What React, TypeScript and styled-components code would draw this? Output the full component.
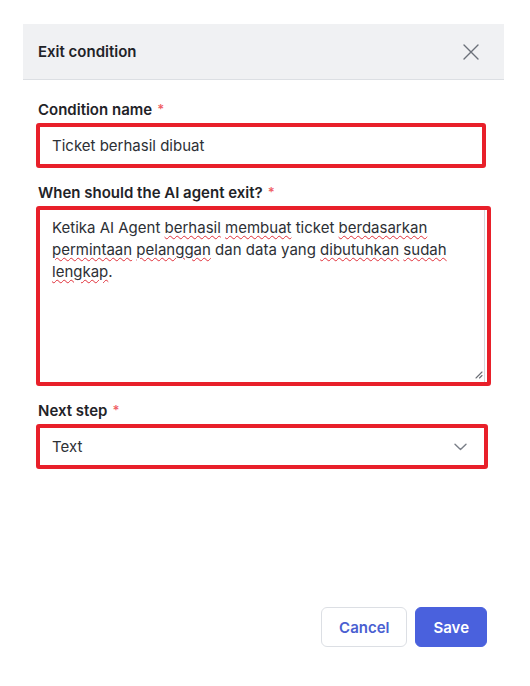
import React from "react";
import styled, { createGlobalStyle } from "styled-components";

const GlobalStyle = createGlobalStyle`
  html, body {
    margin: 0;
    padding: 0;
    background: #ffffff;
  }
  body {
    font-family: Inter, "Noto Sans", "Liberation Sans", sans-serif;
    color: #1f2328;
  }
`;

const Panel = styled.div`
  display: flex;
  flex-direction: column;
  width: 481px;
  height: 662px;
  margin: 24px 0 0 23px;
  background: #ffffff;
`;

const Header = styled.div`
  display: flex;
  align-items: center;
  justify-content: space-between;
  height: 55px;
  padding: 0 25px 0 15px;
  background: #f0f1f3;
  border-bottom: 1px solid #dcdfe3;
`;

const Title = styled.h2`
  margin: 0;
  font-size: 15px;
  font-weight: 600;
  color: #1f2328;
`;

const CloseButton = styled.button`
  display: flex;
  align-items: center;
  justify-content: center;
  padding: 0;
  border: none;
  background: none;
  cursor: pointer;
`;

const Body = styled.div`
  display: flex;
  flex-direction: column;
  flex: 1;
  padding: 20px 15px 0;
`;

const Field = styled.div`
  display: flex;
  flex-direction: column;
  gap: 3px;
  margin-bottom: 15px;
`;

const Label = styled.label`
  font-size: 15px;
  font-weight: 600;
  line-height: 20px;
  color: #1f2328;
`;

const Required = styled.span`
  display: inline-block;
  color: #ef5f66;
  font-size: 13px;
  line-height: 13px;
  margin-left: 5px;
  vertical-align: 1px;
`;

const Box = styled.div<{ $width: number }>`
  box-sizing: border-box;
  width: ${(p) => p.$width}px;
  margin-left: -2px;
  border: 4px solid #e8202a;
  border-radius: 3px;
  background: #ffffff;
  font-size: 15px;
  color: #2d3035;
`;

const InputBox = styled(Box)`
  display: flex;
  align-items: center;
  height: 45px;
  padding: 0 12px;
`;

const TextAreaBox = styled(Box)`
  position: relative;
  height: 180px;
  padding: 7px 12px;
  line-height: 22px;
  box-shadow: inset -2px 0 0 #ffffff, inset -3px 0 0 #d4d7dc;
`;

const Misspelled = styled.span`
  text-decoration: underline wavy #e0303a;
  text-decoration-thickness: 1.2px;
  text-underline-offset: 2px;
`;

const Resize = styled.svg`
  position: absolute;
  right: 4px;
  bottom: 3px;
`;

const SelectBox = styled(InputBox)`
  justify-content: space-between;
  padding: 0 17px 0 12px;
`;

const Footer = styled.div`
  display: flex;
  justify-content: flex-end;
  gap: 8px;
  padding: 0 17px 39px 0;
`;

const Button = styled.button<{ $primary?: boolean }>`
  height: 40px;
  padding: 0 17px;
  border-radius: 6px;
  font-family: inherit;
  font-size: 15px;
  font-weight: 600;
  cursor: pointer;
  border: 1px solid ${(p) => (p.$primary ? "#4a61dd" : "#dcdfe4")};
  background: ${(p) => (p.$primary ? "#4a61dd" : "#ffffff")};
  color: ${(p) => (p.$primary ? "#ffffff" : "#4a5fd1")};
`;

const words: [string, boolean][] = [
  ["Ketika AI Agent ", false],
  ["berhasil", true],
  [" ", false],
  ["membuat", true],
  [" ticket ", false],
  ["berdasarkan", true],
  [" ", false],
  ["permintaan", true],
  [" ", false],
  ["pelanggan", true],
  [" dan data yang ", false],
  ["dibutuhkan", true],
  [" ", false],
  ["sudah", true],
  [" ", false],
  ["lengkap", true],
  [".", false],
];

const App = () => {
  return (
    <>
      <GlobalStyle />
      <Panel>
        <Header>
          <Title>Exit condition</Title>
          <CloseButton aria-label="Close">
            <svg width="16" height="16" viewBox="0 0 16 16" fill="none">
              <path d="M1 1L15 15M15 1L1 15" stroke="#6b7079" strokeWidth="1.4" strokeLinecap="round" />
            </svg>
          </CloseButton>
        </Header>
        <Body>
          <Field>
            <Label>
              Condition name<Required>*</Required>
            </Label>
            <InputBox $width={450}>Ticket berhasil dibuat</InputBox>
          </Field>
          <Field>
            <Label>
              When should the AI agent exit?<Required>*</Required>
            </Label>
            <TextAreaBox $width={455}>
              {words.map(([w, bad], i) =>
                bad ? <Misspelled key={i}>{w}</Misspelled> : <React.Fragment key={i}>{w}</React.Fragment>
              )}
              <Resize width="9" height="9" viewBox="0 0 9 9">
                <path d="M8 2L2 8M8 5.5L5.5 8" stroke="#6a6e75" strokeWidth="1.1" strokeLinecap="round" />
              </Resize>
            </TextAreaBox>
          </Field>
          <Field>
            <Label>
              Next step<Required>*</Required>
            </Label>
            <SelectBox $width={452}>
              <span>Text</span>
              <svg width="13" height="8" viewBox="0 0 13 8" fill="none">
                <path d="M1 1.2L6.5 6.5L12 1.2" stroke="#7a7f88" strokeWidth="1.4" strokeLinecap="round" strokeLinejoin="round" />
              </svg>
            </SelectBox>
          </Field>
        </Body>
        <Footer>
          <Button>Cancel</Button>
          <Button $primary>Save</Button>
        </Footer>
      </Panel>
    </>
  );
};

export default App;
